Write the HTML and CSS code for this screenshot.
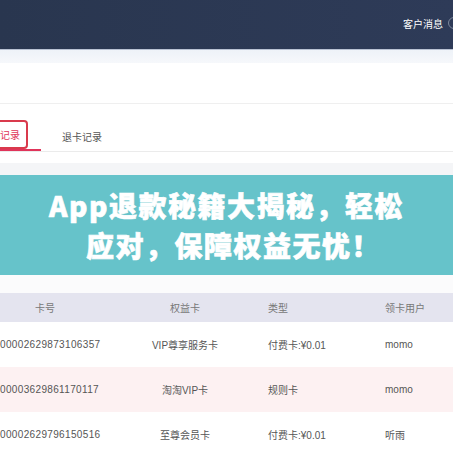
FILE: index.html
```html
<html>
<head>
<title>领卡记录</title>
<link rel="stylesheet" href="styles.css">
</head>
<body>
<div class="topbar">
    <span class="msg">客户消息</span>
    <span class="msgIcon"></span>
</div>
<div class="subbar"></div>
<div class="panel"></div>
<div class="tabsWrap">
    <div class="tabs">
        <div class="tab active"><span class="mark">领卡记录</span></div>
        <div class="tab">退卡记录</div>
    </div>
</div>
<div class="gap"></div>
<div class="banner">
    <p>App退款秘籍大揭秘，轻松</p>
    <p class="second">应对，保障权益无忧！</p>
</div>
<div class="gap2"></div>
<div class="list">
    <div class="row head">
        <div class="c1">卡号</div>
        <div class="c2">权益卡</div>
        <div class="c3">类型</div>
        <div class="c4">领卡用户</div>
    </div>
    <div class="row">
        <div class="c1 num">00002629873106357</div>
        <div class="c2">VIP尊享服务卡</div>
        <div class="c3">付费卡:¥0.01</div>
        <div class="c4">momo</div>
    </div>
    <div class="row pink">
        <div class="c1 num">00003629861170117</div>
        <div class="c2">淘淘VIP卡</div>
        <div class="c3">规则卡</div>
        <div class="c4">momo</div>
    </div>
    <div class="row">
        <div class="c1 num">00002629796150516</div>
        <div class="c2">至尊会员卡</div>
        <div class="c3">付费卡:¥0.01</div>
        <div class="c4">听雨</div>
    </div>
</div>
</body>
</html>
```

FILE: styles.css
```css
body,div,p{margin:0;padding:0;}
body{width:453px;height:453px;overflow:hidden;background:#fff;font-family:"Liberation Sans","Noto Sans CJK SC",sans-serif;color:#555;}
.topbar{height:49px;background:linear-gradient(90deg,#29364f,#2e3b58);display:flex;justify-content:flex-end;align-items:center;}
.msg{color:#fff;font-size:10px;margin-top:-3px;}
.msgIcon{width:10px;height:10px;border:1px solid #7e889c;border-radius:50%;margin-left:5px;margin-right:-7px;margin-top:-3px;}
.subbar{height:13px;border-top:1px solid #b9c2d3;background:linear-gradient(180deg,#eef2f8,#f6f8fb);}
.panel{height:40px;border-bottom:1px solid #efefef;}
.tabsWrap{padding-bottom:11px;}
.tabs{height:47px;border-bottom:1px solid #ebebeb;display:flex;}
.tab{width:82px;font-size:10px;color:#555;display:flex;justify-content:center;align-items:center;padding-top:17px;box-sizing:border-box;}
.tab.active{margin-left:-41px;color:#e0345a;border-bottom:2px solid #e0345a;}
.mark{border:2px solid #d93a4c;border-radius:4px;padding:5px 6px;margin-top:-2px;}
.gap{height:12px;background:#f4f5f7;}
.banner{height:100px;background:#66c3ca;color:#fff;font-family:"Noto Sans CJK SC",sans-serif;font-weight:900;font-size:28px;line-height:40px;letter-spacing:1.5px;text-align:center;display:flex;flex-direction:column;justify-content:center;-webkit-text-stroke:0.6px #fff;}
.banner .second{padding-left:14px;}
.gap2{height:18px;background:#fbfbfc;}
.row{display:grid;grid-template-columns:96px 164px 125px 1fr;height:45px;align-items:center;font-size:10px;}
.row.head{height:29px;background:#e4e4ef;color:#777;}
.row.pink{background:#fdf1f2;}
.c1{text-align:center;white-space:nowrap;padding-right:6px;}
.c1.num{padding-right:0;letter-spacing:0.35px;}
.c2{text-align:center;padding-left:14px;}
.c3{padding-left:8px;}
```
